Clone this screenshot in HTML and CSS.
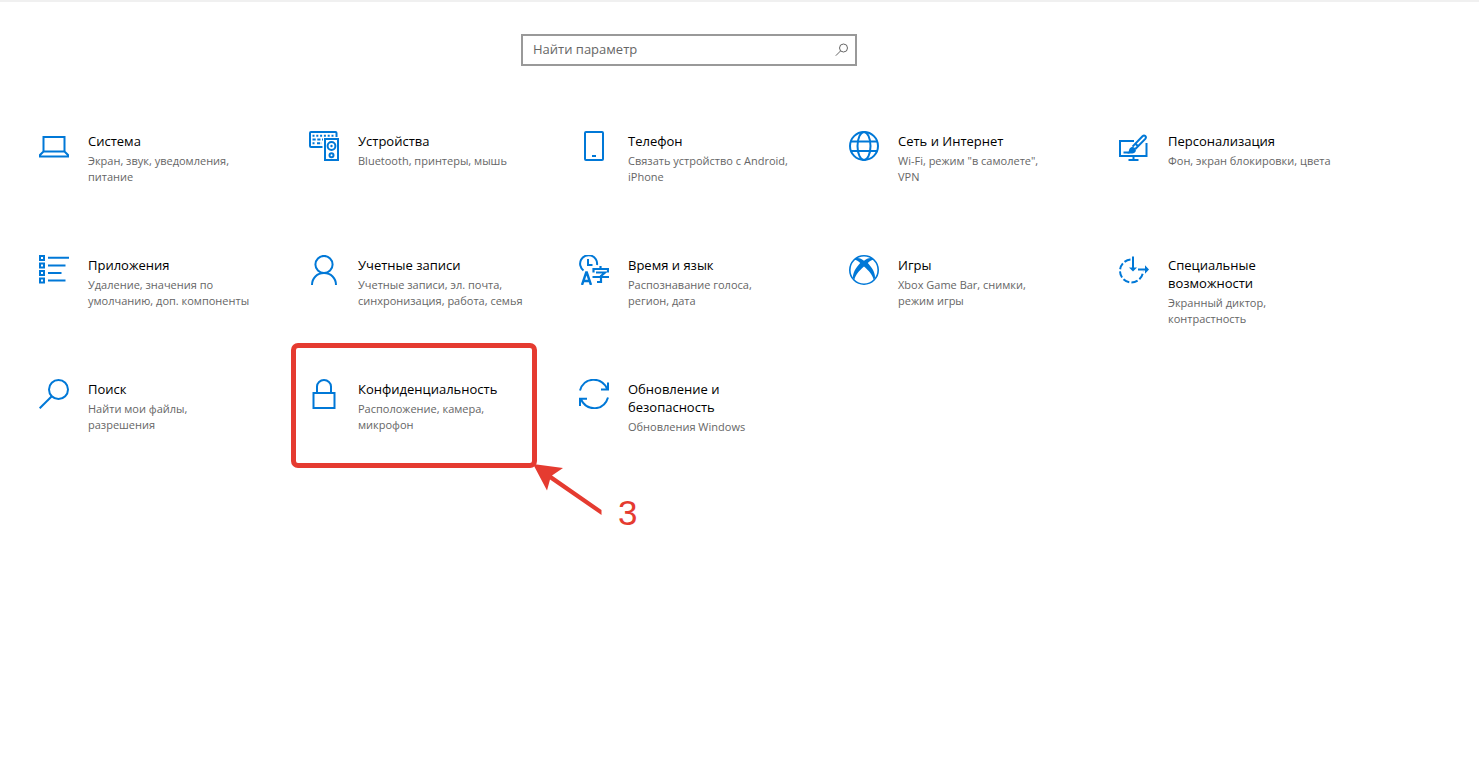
FILE: index.html
```html
<!DOCTYPE html>
<html lang="ru">
<head>
<meta charset="utf-8">
<title>Параметры</title>
<link rel="stylesheet" href="styles.css">
</head>
<body>
<main class="settings">
  <form class="search" role="search">
    <input class="search-input" type="text" placeholder="Найти параметр" aria-label="Найти параметр">
    <button class="search-button" type="submit" aria-label="Найти">
      <svg width="14" height="14" viewBox="0 0 14 14"><circle cx="8.5" cy="5" r="4"/><path d="M5.6 7.9L.8 12.7"/></svg>
    </button>
  </form>
  <nav class="grid" aria-label="Категории">
    <a class="tile" href="#">
      <svg class="icon" viewBox="0 0 30 30"><path d="M4.500 6h21v14.500h-21zM4.500 20.500L1 24v1.600h28V24l-3.500-3.500"/></svg>
      <span class="text"><span class="title">Система</span><span class="note">Экран, звук, уведомления, питание</span></span>
    </a>
    <a class="tile" href="#">
      <svg class="icon" viewBox="0 0 30 30"><path d="M13.500 16H2Q1 16 1 15V2Q1 1 2 1h24.500Q27.500 1 27.500 2v4"/><path d="M3.500 4.700h22" stroke-dasharray="2 1.800"/><path d="M3.500 8.500h8M3.500 12.300h2M8 12.300h5M13 8.500h1" stroke-dasharray="3.200 1.600"/><path d="M16 8h13v21H16z"/><circle cx="22.500" cy="15" r="3.900"/><circle cx="22.500" cy="24.200" r="2"/><circle class="solid" cx="22.500" cy="15" r="1.200"/></svg>
      <span class="text"><span class="title">Устройства</span><span class="note">Bluetooth, принтеры, мышь</span></span>
    </a>
    <a class="tile" href="#">
      <svg class="icon" viewBox="0 0 30 30"><rect x="6" y="1" width="18" height="28" rx="1"/><path d="M13 25h4"/></svg>
      <span class="text"><span class="title">Телефон</span><span class="note">Связать устройство с Android, iPhone</span></span>
    </a>
    <a class="tile" href="#">
      <svg class="icon" viewBox="0 0 30 30"><circle cx="15" cy="15" r="14"/><ellipse cx="15" cy="15" rx="6.500" ry="14"/><path d="M2 10.500h26M2 20h26"/></svg>
      <span class="text"><span class="title">Сеть и Интернет</span><span class="note">Wi-Fi, режим "в самолете",<br>VPN</span></span>
    </a>
    <a class="tile" href="#">
      <svg class="icon" viewBox="0 0 30 30"><path d="M15 10H1v15h26.500V12M14.500 25v4M9.500 29h10"/><path d="M4.500 21.500h6M13.500 15.600l10-10.400c2-1.800 4.500.5 2.800 2.700L16.300 18M16.500 12.700l3 3"/><path class="solid" d="M8 22.500c2-.5 1.500-3 2.500-4.800 1.500-2.700 5.800-2.200 6.300.8.500 2.800-1.800 4-4.300 4z"/></svg>
      <span class="text"><span class="title">Персонализация</span><span class="note">Фон, экран блокировки, цвета</span></span>
    </a>
    <a class="tile" href="#">
      <svg class="icon" viewBox="0 0 30 30"><path d="M1 1h4v4H1zM1 8.500h4v4H1zM1 16h4v4H1zM1 23.500h4v4H1zM9 2.800h21M9 10.400h17.500M9 17.900h13.500M9 25.400h17.500"/></svg>
      <span class="text"><span class="title">Приложения</span><span class="note">Удаление, значения по умолчанию, доп. компоненты</span></span>
    </a>
    <a class="tile" href="#">
      <svg class="icon" viewBox="0 0 30 30"><circle cx="15" cy="9.500" r="8.600"/><path d="M3 30c0-7 5-11.900 12-11.900S27 23 27 30"/></svg>
      <span class="text"><span class="title">Учетные записи</span><span class="note">Учетные записи, эл. почта, синхронизация, работа, семья</span></span>
    </a>
    <a class="tile" href="#">
      <svg class="icon" viewBox="0 0 30 30"><path d="M4.500 15.500A8.500 8.500 0 1 1 18 10M9 4v6h4.500"/><path d="M3 30L7.200 17.500h.6L12 30M4 26h7" stroke-width="2.400"/><path d="M21.500 11v3M14.500 17.500V14H29v3.500M17 17.500h9l-4 3.500v6h-4M13.500 22H30" stroke-width="2.200"/></svg>
      <span class="text"><span class="title">Время и язык</span><span class="note">Распознавание голоса,<br>регион, дата</span></span>
    </a>
    <a class="tile" href="#">
      <svg class="icon" viewBox="0 0 30 30"><circle cx="15" cy="15" r="14.200" stroke-width="1.600"/><path class="solid" d="M6 3.500c3.500-1.200 6.500.5 9 2.200 2.500-1.700 5.500-3.400 9-2.200l1.200 1.200c-2.200-.3-4.500 1.300-6.400 3.300 4 4.300 7.600 9.600 7.200 14.800l-1.500 2c-.5-4.500-4.800-9.300-9.500-13.300-4.700 4-9 8.800-9.500 13.300l-1.500-2C3.600 17.600 7.200 12.300 11.200 8 9.300 6 7 4.400 4.800 4.700z"/></svg>
      <span class="text"><span class="title">Игры</span><span class="note">Xbox Game Bar, снимки,<br>режим игры</span></span>
    </a>
    <a class="tile" href="#">
      <svg class="icon" viewBox="0 0 30 30"><path d="M11.500 4.500A11.500 11.500 0 1 0 24 16.500" stroke-dasharray="6.500 2.200"/><path d="M14 1.500v13M19 14.500h9"/><path class="solid" d="M10 12.500h8l-4 4zM26 10.300l4 4.200-4 4.200z"/></svg>
      <span class="text"><span class="title">Специальные возможности</span><span class="note">Экранный диктор, контрастность</span></span>
    </a>
    <a class="tile" href="#">
      <svg class="icon" viewBox="0 0 30 30"><circle cx="19.500" cy="10.500" r="9.500"/><path d="M12.800 17.200L.7 29.300"/></svg>
      <span class="text"><span class="title">Поиск</span><span class="note">Найти мои файлы,<br>разрешения</span></span>
    </a>
    <a class="tile" href="#">
      <svg class="icon" viewBox="0 0 30 30"><path d="M4.500 14h21v15h-21zM8 14V7.500a7 6.500 0 0 1 14 0V14"/></svg>
      <span class="text"><span class="title">Конфиденциальность</span><span class="note">Расположение, камера, микрофон</span></span>
      <span class="highlight"></span>
      <svg class="arrow" width="72" height="52" viewBox="0 0 72 52"><path d="M0 0L30 4 19 11.500 68.500 46v5L17 15.500 14 26.500z"/></svg>
      <span class="step">3</span>
    </a>
    <a class="tile" href="#">
      <svg class="icon" viewBox="0 0 30 30"><path d="M1 11.500C5-2 22-3 28.300 10M29 3.500v7h-7M29 18.500C25 32 8 33 1.700 20M1 27v-7.200h7"/></svg>
      <span class="text"><span class="title">Обновление и безопасность</span><span class="note">Обновления Windows</span></span>
    </a>
  </nav>
</main>
</body>
</html>
```
FILE: styles.css
```css
* {
  box-sizing: border-box;
}

body {
  min-height: 100vh;
  margin: 0;
  background: #fff;
  border-top: 2px solid #f0f0f0;
  font-family: "Open Sans", "Noto Sans", sans-serif;
  color: #000;
}

.settings {
  max-width: 1350px;
  margin: 0 14px;
  padding-top: 32px;
}

.search {
  display: flex;
  width: 336px;
  height: 32px;
  margin: 0 auto 29px;
  border: 2px solid #999;
}

.search-input {
  flex: 1;
  min-width: 0;
  padding: 0 0 2px 10px;
  border: 0;
  outline: 0;
  background: none;
  font: 13px "Open Sans", "Noto Sans", sans-serif;
  color: #000;
}

.search-input::placeholder {
  color: #666;
  opacity: 1;
}

.search-button {
  display: flex;
  align-items: center;
  padding: 0 6px;
  border: 0;
  background: none;
}

.search-button svg {
  fill: none;
  stroke: #666;
}

.grid {
  display: grid;
  grid-template-columns: repeat(auto-fill, minmax(270px, 1fr));
  grid-auto-rows: minmax(124px, auto);
}

.tile {
  position: relative;
  display: flex;
  align-items: flex-start;
  gap: 19px;
  padding: 36px 24px 0 25px;
  color: inherit;
  text-decoration: none;
}

.icon {
  flex: none;
  width: 30px;
  height: 30px;
  fill: none;
  stroke: #0078d7;
  stroke-width: 2;
}

.icon .solid {
  fill: #0078d7;
  stroke: none;
}

.text {
  display: flex;
  flex-direction: column;
  gap: 3px;
  max-width: 172px;
  padding-top: 1px;
}

.title {
  font-size: 13px;
  line-height: 18px;
}

.note {
  font-size: 11px;
  line-height: 16px;
  color: #666;
}

.highlight {
  position: absolute;
  top: 0;
  left: 7px;
  width: 246px;
  height: 125px;
  border: 5px solid #e53b30;
  border-radius: 7px;
}

.arrow {
  position: absolute;
  top: 121px;
  left: 249px;
  fill: #e53b30;
}

.step {
  position: absolute;
  top: 150px;
  left: 334px;
  font: 35px/40px "Liberation Sans", Arial, sans-serif;
  color: #e53b30;
}
```
